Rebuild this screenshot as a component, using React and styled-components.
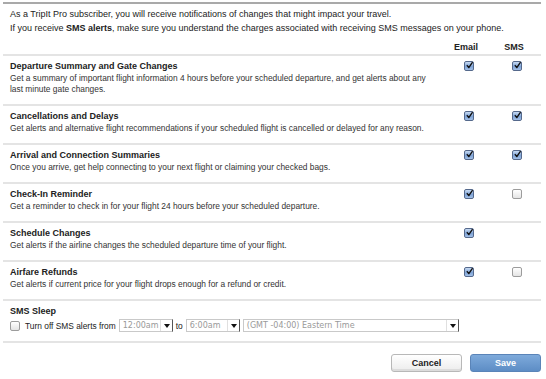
import React, { useState } from "react";
import styled, { createGlobalStyle } from "styled-components";

const GlobalStyle = createGlobalStyle`
  html, body {
    margin: 0;
    padding: 0;
    background: #fff;
  }
  body {
    font-family: "Liberation Sans", Arial, Helvetica, sans-serif;
    font-size: 9px;
    color: #222;
  }
`;

const ALERTS = [
  {
    id: "departure",
    title: "Departure Summary and Gate Changes",
    desc: "Get a summary of important flight information 4 hours before your scheduled departure, and get alerts about any last minute gate changes.",
    email: true,
    sms: true,
  },
  {
    id: "cancel",
    title: "Cancellations and Delays",
    desc: "Get alerts and alternative flight recommendations if your scheduled flight is cancelled or delayed for any reason.",
    email: true,
    sms: true,
  },
  {
    id: "arrival",
    title: "Arrival and Connection Summaries",
    desc: "Once you arrive, get help connecting to your next flight or claiming your checked bags.",
    email: true,
    sms: true,
  },
  {
    id: "checkin",
    title: "Check-In Reminder",
    desc: "Get a reminder to check in for your flight 24 hours before your scheduled departure.",
    email: true,
    sms: false,
  },
  {
    id: "schedule",
    title: "Schedule Changes",
    desc: "Get alerts if the airline changes the scheduled departure time of your flight.",
    email: true,
    sms: null,
  },
  {
    id: "refunds",
    title: "Airfare Refunds",
    desc: "Get alerts if current price for your flight drops enough for a refund or credit.",
    email: true,
    sms: false,
  },
];

const Check = ({ checked, onToggle }) => (
  <Box checked={checked} onClick={onToggle}>
    {checked && (
      <svg width="9" height="9" viewBox="0 0 9 9">
        <path d="M1.6 4.6 L3.6 7.2 L8 0.8" fill="none" stroke="#111" strokeWidth="1.8" strokeLinecap="round" strokeLinejoin="round" />
      </svg>
    )}
  </Box>
);

const Select = ({ value, width }) => (
  <SelectBox style={{ width }}>
    <SelectValue>{value}</SelectValue>
    <SelectArrow />
  </SelectBox>
);

export default function App() {
  const [prefs, setPrefs] = useState(ALERTS);
  const [sleep, setSleep] = useState(false);

  const toggle = (id, key) =>
    setPrefs((prev) =>
      prev.map((p) => (p.id === id ? { ...p, [key]: !p[key] } : p))
    );

  return (
    <>
      <GlobalStyle />
      <Panel>
        <Intro>
          As a TripIt Pro subscriber, you will receive notifications of changes that might impact your travel.
          <br />
          If you receive <b>SMS alerts</b>, make sure you understand the charges associated with receiving SMS messages on your phone.
        </Intro>
        <HeaderRow>
          <span />
          <ColLabel>Email</ColLabel>
          <ColLabel>SMS</ColLabel>
        </HeaderRow>
        {prefs.map((p) => (
          <Row key={p.id}>
            <Text>
              <Title>{p.title}</Title>
              <Desc>{p.desc}</Desc>
            </Text>
            <Cell>
              <Check checked={p.email} onToggle={() => toggle(p.id, "email")} />
            </Cell>
            <Cell>
              {p.sms !== null && (
                <Check checked={p.sms} onToggle={() => toggle(p.id, "sms")} />
              )}
            </Cell>
          </Row>
        ))}
        <Sleep>
          <Title>SMS Sleep</Title>
          <Controls>
            <Check checked={sleep} onToggle={() => setSleep(!sleep)} />
            <Label>Turn off SMS alerts from</Label>
            <Select value="12:00am" width={54} />
            <Label>to</Label>
            <Select value="6:00am" width={54} />
            <Select value="(GMT -04:00) Eastern Time" width={216} />
          </Controls>
        </Sleep>
        <Actions>
          <Button>Cancel</Button>
          <Button primary>Save</Button>
        </Actions>
      </Panel>
    </>
  );
}

const Panel = styled.div`
  margin: 2px 5px 0 3px;
  border-top: 2px solid #a9a9a9;
`;

const Intro = styled.div`
  padding: 3px 7px 0;
  line-height: 14px;
  color: #222;

  b {
    font-weight: bold;
  }
`;

const HeaderRow = styled.div`
  display: grid;
  grid-template-columns: 1fr 48px 48px;
  margin-top: 6px;
  padding: 0 0 1px 7px;
  line-height: 12px;
  border-bottom: 2px solid #e4e4e4;
`;

const ColLabel = styled.span`
  font-weight: bold;
  text-align: center;
  color: #222;
  padding-right: 6px;
`;

const Row = styled.div`
  display: grid;
  grid-template-columns: 1fr 48px 48px;
  padding: 4px 0 9px 7px;
  border-bottom: 2px solid #e4e4e4;
`;

const Text = styled.div`
  max-width: 425px;
`;

const Title = styled.div`
  font-weight: bold;
  line-height: 13px;
  color: #222;
`;

const Desc = styled.div`
  font-size: 8.4px;
  line-height: 11px;
  color: #333;
`;

const Cell = styled.div`
  display: flex;
  justify-content: center;
  padding-top: 1px;
`;

const Box = styled.span`
  box-sizing: border-box;
  display: inline-flex;
  align-items: center;
  justify-content: center;
  width: 10px;
  height: 10px;
  border-radius: 2px;
  border: 1px solid ${(p) => (p.checked ? "#55698c" : "#9c9c9c")};
  background: ${(p) =>
    p.checked
      ? "linear-gradient(#c9dcf4, #7ea3d6 55%, #a2c0e8)"
      : "linear-gradient(#ffffff, #e4e4e4)"};
  cursor: pointer;
  flex-shrink: 0;

  svg {
    margin-top: -2px;
    margin-left: 1px;
  }
`;

const Sleep = styled.div`
  padding: 4px 7px 9px;
  border-bottom: 2px solid #e4e4e4;
`;

const Controls = styled.div`
  display: flex;
  align-items: center;
  height: 13px;
  margin-top: 1px;
  gap: 3px;

  & > span:first-child {
    margin-right: 2px;
  }
`;

const Label = styled.span`
  font-size: 8.4px;
  color: #222;
  line-height: 12px;
`;

const SelectBox = styled.span`
  box-sizing: border-box;
  display: inline-flex;
  align-items: stretch;
  height: 13px;
  border: 1px solid #c9c9c9;
  border-right-color: #555;
  background: #fff;
`;

const SelectValue = styled.span`
  flex: 1;
  padding-left: 3px;
  font-family: "DejaVu Sans", Verdana, sans-serif;
  font-size: 8px;
  line-height: 11px;
  color: #999;
  white-space: nowrap;
  overflow: hidden;
`;

const SelectArrow = styled.span`
  position: relative;
  width: 11px;
  border-left: 1px solid #e0e0e0;

  &::after {
    content: "";
    position: absolute;
    left: 3px;
    top: 4px;
    border-left: 3px solid transparent;
    border-right: 3px solid transparent;
    border-top: 4px solid #111;
  }
`;

const Actions = styled.div`
  display: flex;
  justify-content: flex-end;
  gap: 8px;
  margin-top: 11px;
`;

const Button = styled.button`
  box-sizing: border-box;
  width: 71px;
  height: 18px;
  padding: 0;
  border-radius: 3px;
  font-family: "Liberation Sans", Arial, sans-serif;
  font-size: 9px;
  font-weight: bold;
  cursor: pointer;
  border: 1px solid ${(p) => (p.primary ? "#5a84b8" : "#b8b8b8")};
  color: ${(p) => (p.primary ? "#fff" : "#222")};
  background: ${(p) =>
    p.primary
      ? "linear-gradient(#7eaadb, #5d8dc5)"
      : "linear-gradient(#ffffff, #ececec)"};
  box-shadow: ${(p) =>
    p.primary ? "none" : "inset 0 -2px 0 #dcdcdc"};
`;
